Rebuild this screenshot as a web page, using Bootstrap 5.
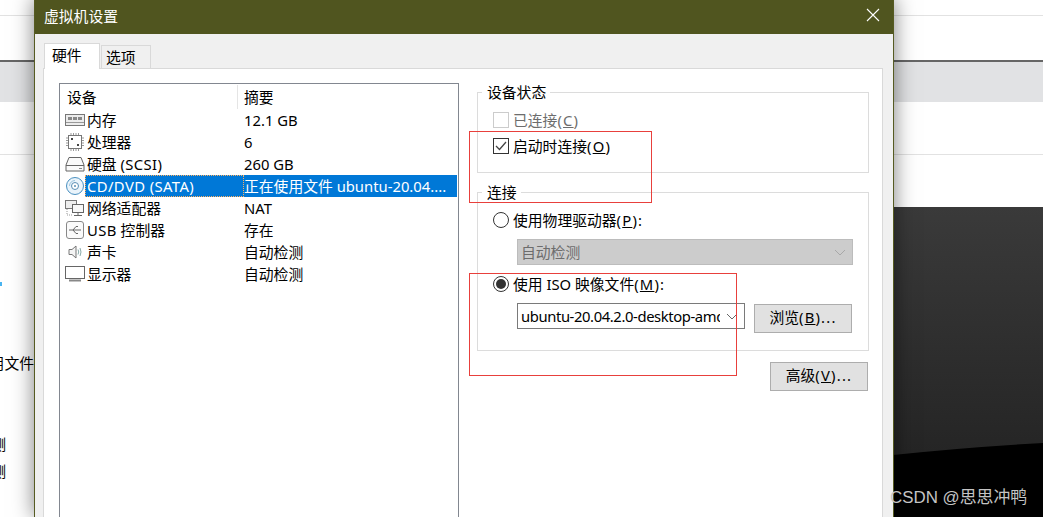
<!doctype html>
<html lang="zh-CN">
<head>
<meta charset="utf-8">
<title>虚拟机设置</title>
<link href="https://cdn.jsdelivr.net/npm/bootstrap@5.3.0/dist/css/bootstrap.min.css" rel="stylesheet">
<style>
html,body{height:517px;overflow:hidden;background:#fff;margin:0}
body{position:relative;width:1043px;font-family:"Noto Sans","Noto Sans CJK SC",sans-serif;font-size:14.8px;line-height:22px;color:#000}
.bg-a{height:62px;border-bottom:2px solid #666;position:relative}
.bg-a::before{content:"";display:block;height:16px;border-bottom:1px solid #e2e2e2}
.bg-b{height:40px;background:#e1e2e4}
.bg-c{height:53px;border-bottom:1px solid #e2e2e2}
.bg-d{height:52px}
.bg-e{height:310px;margin-left:500px;display:block;width:543px}
.peek{position:absolute;left:0;width:34px;overflow:hidden;white-space:nowrap;display:flex;justify-content:flex-end}
.peek-blue{left:0;top:282px;width:2px;height:4px;background:#49b4f0}
.vm-win{position:absolute;left:34px;top:-2px;width:860px;height:519px;background:#f0f0f0;border:1px solid #565b22;border-top:0;border-bottom:0;box-shadow:0 0 20px rgba(0,0,0,.5);overflow:hidden}
.vm-title{height:36px;background:#50551f;color:#fff;padding:7px 0 0 9px}
.vm-x{position:absolute;right:13px;top:10px}
.vm-tabs{padding:9px 0 0 9px;margin:0;list-style:none;border:0;gap:1px;height:34px;align-items:flex-end}
.vm-tab{height:23px;width:50px;background:#f0f0f0;border:1px solid #d9d9d9;border-bottom:0;padding:0 0 0 4px;line-height:23px;color:#000}
.vm-tab.on{height:26px;width:56px;background:#fff;padding-left:7px;margin-bottom:-1px;position:relative;z-index:1;line-height:22px}
.vm-pane{margin-left:8px;width:840px;height:452px;background:#fff;border:1px solid #d9d9d9;padding:14px 0 0 15px;gap:18px}
.vm-list{width:400px;height:440px;border:1px solid #828790;flex:none;padding-top:1px}
.vm-head{height:24px;line-height:24px;padding-left:7px}
.vm-head span{display:block}
.vm-c1{width:171px;border-right:1px solid #e5e5e5}
.vm-c2{padding-left:6px}
.vm-row{height:22px;line-height:22px}
.vm-ico{width:25px;flex:none;padding-left:5px;display:flex;align-items:center}
.vm-name{width:159px;padding-left:2px;flex:none}
.vm-wide{letter-spacing:.4px}
.vm-mn{letter-spacing:1.2px}
.vm-val{flex:1;margin-right:1px}
.vm-row.sel .vm-name,.vm-row.sel .vm-val{background:#0078d7;color:#fff}
.vm-row.sel .vm-name{outline:1px dotted #ffb060;outline-offset:-1px}
.vm-right{width:392px;flex:none;padding-top:8px}
.vm-group{border:1px solid #dcdcdc;padding:0 0 0 15px;margin:0;min-width:0;position:relative}
.vm-group legend{float:none;width:auto;padding:0 4px 0 5px;margin:0 0 0 -11px;font-size:14.8px;line-height:22px}
.vm-g1{height:92px;margin-top:-10px}
.vm-g2{height:170px;margin-top:8px}
.vm-top{margin-top:4px}
.vm-line{height:26px;gap:4px;line-height:26px}
.vm-line .form-check-input{width:16px;height:16px;margin:0;flex:none;background-color:#fff;border:1px solid #333;box-shadow:none;opacity:1}
.vm-line .form-check-input[type=checkbox]{border-radius:0}
.vm-line .form-check-input:checked[type=checkbox]{background-color:#fff;border-color:#333;background-image:url("data:image/svg+xml,%3csvg xmlns='http://www.w3.org/2000/svg' viewBox='0 0 16 16'%3e%3cpath d='M3 8l3.5 3.5L13 4' fill='none' stroke='%23444' stroke-width='1.3'/%3e%3c/svg%3e");background-size:16px}
.vm-line .form-check-input:disabled{border-color:#ccc}
.vm-line .form-check-input[type=radio]:checked{background-color:#fff;border-color:#333;background-image:url("data:image/svg+xml,%3csvg xmlns='http://www.w3.org/2000/svg' viewBox='0 0 16 16'%3e%3ccircle cx='8' cy='8' r='5' fill='%23333'/%3e%3c/svg%3e");background-size:16px}
.vm-dim{color:#6d6d6d}
.vm-sel{height:26px;line-height:24px;margin-left:24px;border:1px solid #7a7a7a;background:#fff;padding:0 3px;position:relative}
.vm-sel-dis{width:336px;background:#ccc;border-color:#bcbcbc;color:#6d6d6d;margin-top:6px}
.vm-sel-on{width:228px;overflow:hidden;white-space:nowrap}
.vm-sel-txt{display:block;width:199px;overflow:hidden;letter-spacing:-.4px}
.vm-chev{position:absolute;right:6px;top:9px}
.vm-btn{width:98px;height:29px;background:#e1e1e1;border:1px solid #adadad;border-radius:0;font-size:14.8px;line-height:24px;padding:0 0 3px;color:#000;text-align:center}
.vm-btn:hover{background:#e1e1e1;color:#000;border-color:#adadad}
.vm-iso{margin-top:6px;gap:9px;align-items:flex-start}
.vm-iso .vm-btn{margin-top:1px}
.vm-mid{margin-top:6px}
.vm-adv{margin-top:11px;margin-right:1px}
.vm-rect{position:absolute;border:1px solid #e8403c;pointer-events:none;z-index:3}
.vm-mark{position:absolute;left:890px;top:487px;color:#c4c4c4;font-size:16.9px;line-height:22px;white-space:nowrap;font-family:"Liberation Sans","Noto Sans CJK SC",sans-serif;z-index:4}
</style>
</head>
<body>
<div class="bg-a"></div>
<div class="bg-b"></div>
<div class="bg-c"></div>
<div class="bg-d"></div>
<svg class="bg-e" viewBox="0 0 543 310" preserveAspectRatio="none" aria-hidden="true">
  <defs><linearGradient id="g1" x1="0" y1="0" x2="0" y2="1"><stop offset="0" stop-color="#3a3a3a"/><stop offset="1" stop-color="#222"/></linearGradient></defs>
  <rect width="543" height="310" fill="#000"/>
  <path d="M0 0H543V236Q470 240 393 248L0 280Z" fill="url(#g1)"/>
</svg>

<div class="peek peek-blue"></div>
<div class="peek" style="top:352px">用文件</div>
<div class="peek" style="top:433px;left:-28px">测</div>
<div class="peek" style="top:460px;left:-28px">测</div>

<div class="vm-win">
  <div class="vm-title">虚拟机设置</div>
  <svg class="vm-x" width="14" height="14" viewBox="0 0 14 14" aria-hidden="true"><path d="M1 1L13 13M13 1L1 13" stroke="#fff" stroke-width="1.1" fill="none"/></svg>
  <ul class="nav vm-tabs d-flex">
    <li class="vm-tab on">硬件</li>
    <li class="vm-tab">选项</li>
  </ul>
  <div class="vm-pane d-flex">
    <div class="vm-list">
      <div class="vm-head d-flex"><span class="vm-c1">设备</span><span class="vm-c2">摘要</span></div>
      <div class="vm-row d-flex"><span class="vm-ico"><svg width="20" height="16" viewBox="0 0 20 16"><rect x=".5" y="2.500" width="19" height="11" fill="#ececec" stroke="#777"/><rect x="3" y="5" width="4" height="3" fill="#888"/><rect x="8" y="5" width="4" height="3" fill="#888"/><rect x="13" y="5" width="4" height="3" fill="#888"/><path d="M1 10.500H19" stroke="#999"/></svg></span><span class="vm-name">内存</span><span class="vm-val">12.1 GB</span></div>
      <div class="vm-row d-flex"><span class="vm-ico"><svg width="20" height="18" viewBox="0 0 20 18"><rect x="3.500" y="2.500" width="13" height="13" fill="#fff" stroke="#777"/><path d="M1 5H3M1 7.500H3M1 10H3M1 12.500H3M17 5H19M17 7.500H19M17 10H19M17 12.500H19M6 0V2M8.500 0V2M11 0V2M13.500 0V2M6 16V18M8.500 16V18M11 16V18M13.500 16V18" stroke="#999"/><rect x="6" y="5" width="2" height="2" fill="#444"/><rect x="12" y="11" width="2" height="2" fill="#444"/></svg></span><span class="vm-name">处理器</span><span class="vm-val">6</span></div>
      <div class="vm-row d-flex"><span class="vm-ico"><svg width="20" height="16" viewBox="0 0 20 16"><path d="M4 1.500H16L19 9V15H1V9Z" fill="#fafafa" stroke="#666"/><path d="M1 9.500H19" stroke="#666"/><path d="M14 12.500H17" stroke="#888"/></svg></span><span class="vm-name">硬盘 <span class="vm-wide">(SCSI)</span></span><span class="vm-val">260 GB</span></div>
      <div class="vm-row sel d-flex"><span class="vm-ico"><svg width="20" height="20" viewBox="0 0 20 20"><circle cx="10" cy="10" r="8.500" fill="#eaf4fb" stroke="#4a90c0"/><circle cx="10" cy="10" r="3.500" fill="#fff" stroke="#5a8fb5"/><circle cx="10" cy="10" r="1" fill="#5a8fb5"/><path d="M4.500 10a5.500 5.500 0 0 1 5.500-5.500" stroke="#9cc4de" fill="none"/></svg></span><span class="vm-name"><span class="vm-wide">CD/DVD (SATA)</span></span><span class="vm-val text-nowrap overflow-hidden">正在使用文件 ubuntu-20.04....</span></div>
      <div class="vm-row d-flex"><span class="vm-ico"><svg width="20" height="18" viewBox="0 0 20 18"><rect x=".5" y="1.500" width="11" height="8" fill="#eee" stroke="#777"/><rect x="7.500" y="5.500" width="11" height="8" fill="#f8f8f8" stroke="#666"/><path d="M13 13.500V16.500M9 16.500H17" stroke="#666"/><path d="M2 10V16H7" stroke="#999" stroke-dasharray="1 1" fill="none"/></svg></span><span class="vm-name">网络适配器</span><span class="vm-val">NAT</span></div>
      <div class="vm-row d-flex"><span class="vm-ico"><svg width="20" height="18" viewBox="0 0 20 18"><rect x="1.500" y=".5" width="17" height="17" rx="2.500" fill="#fafafa" stroke="#888"/><path d="M4 9H16M8 9L11 5.500H13M8 9L11 12.500H13" stroke="#666" fill="none"/></svg></span><span class="vm-name"><span class="vm-wide">USB</span> 控制器</span><span class="vm-val">存在</span></div>
      <div class="vm-row d-flex"><span class="vm-ico"><svg width="20" height="16" viewBox="0 0 20 16"><path d="M4 5.500H7L11 2V14L7 10.500H4Z" fill="#f4f4f4" stroke="#777"/><path d="M13 5.500Q14.500 8 13 10.500M15 4Q17 8 15 12" stroke="#8aa" fill="none"/></svg></span><span class="vm-name">声卡</span><span class="vm-val">自动检测</span></div>
      <div class="vm-row d-flex"><span class="vm-ico"><svg width="20" height="18" viewBox="0 0 20 18"><rect x=".5" y="1.500" width="19" height="12" fill="#fff" stroke="#666"/><path d="M4 15.500H16" stroke="#888" stroke-width="2"/></svg></span><span class="vm-name">显示器</span><span class="vm-val">自动检测</span></div>
    </div>
    <div class="vm-right">
      <fieldset class="vm-group vm-g1">
        <legend>设备状态</legend>
        <div class="vm-line vm-top d-flex align-items-center vm-dim"><input class="form-check-input" type="checkbox" disabled aria-label="已连接"><span>已连接<span class="vm-mn">(<u>C</u>)</span></span></div>
        <div class="vm-line d-flex align-items-center"><input class="form-check-input" type="checkbox" checked aria-label="启动时连接"><span>启动时连接<span class="vm-mn">(<u>O</u>)</span></span></div>
      </fieldset>
      <fieldset class="vm-group vm-g2">
        <legend>连接</legend>
        <div class="vm-line vm-top d-flex align-items-center"><input class="form-check-input" type="radio" name="src" aria-label="物理驱动器"><span>使用物理驱动器<span class="vm-mn">(<u>P</u>):</span></span></div>
        <div class="vm-sel vm-sel-dis">自动检测<svg class="vm-chev" width="12" height="7" viewBox="0 0 12 7"><path d="M1 1L6 6L11 1" stroke="#a8a8a8" fill="none"/></svg></div>
        <div class="vm-line vm-mid d-flex align-items-center"><input class="form-check-input" type="radio" name="src" checked aria-label="ISO"><span>使用 ISO 映像文件<span class="vm-mn">(<u>M</u>):</span></span></div>
        <div class="d-flex vm-iso">
          <div class="vm-sel vm-sel-on"><span class="vm-sel-txt">ubuntu-20.04.2.0-desktop-amd64.iso</span><svg class="vm-chev" width="12" height="7" viewBox="0 0 12 7"><path d="M1 1L6 6L11 1" stroke="#666" fill="none"/></svg></div>
          <button type="button" class="btn vm-btn">浏览<span class="vm-mn">(<u>B</u>)...</span></button>
        </div>
      </fieldset>
      <div class="d-flex justify-content-end vm-adv"><button type="button" class="btn vm-btn">高级<span class="vm-mn">(<u>V</u>)...</span></button></div>
    </div>
  </div>
  <div class="vm-rect" style="left:434px;top:133px;width:183px;height:72px"></div>
  <div class="vm-rect" style="left:434px;top:275px;width:268px;height:103px"></div>
</div>
<div class="vm-mark">CSDN @思思冲鸭</div>
<script src="https://cdn.jsdelivr.net/npm/bootstrap@5.3.0/dist/js/bootstrap.bundle.min.js"></script>
</body>
</html>
